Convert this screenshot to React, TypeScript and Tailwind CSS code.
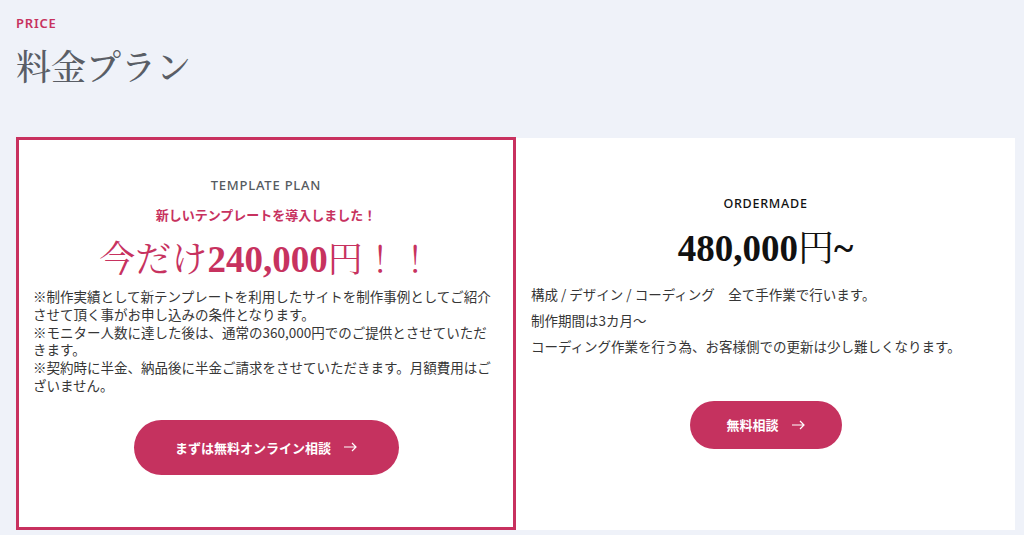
import React from "react";

function Arrow() {
  return (
    <svg width="14" height="10" viewBox="0 0 14 10" fill="none" stroke="currentColor" strokeWidth="1.2" className="ml-3">
      <path d="M1 5h12M9 1l4 4-4 4" />
    </svg>
  );
}

const jp = "font-['Noto_Sans_CJK_JP',sans-serif]";
const serifJp = "font-['Noto_Serif_CJK_JP','Noto_Sans_CJK_JP',serif]";
const serifNum = "font-['Liberation_Serif','Noto_Serif_CJK_JP',serif]";

export default function App() {
  return (
    <div className="w-[1024px] h-[535px] overflow-hidden bg-[#eff2f9] font-['Noto_Sans','Noto_Sans_CJK_JP',sans-serif]">
      <div className="pl-4 pt-[15px]">
        <div className="text-[13px] font-semibold tracking-[0.06em] text-[#c7325f] leading-4">PRICE</div>
        <h1 className={`mt-[12px] text-[35px] leading-[44px] text-[#5a5e66] font-medium ${serifJp}`}>料金プラン</h1>
      </div>
      <div className="flex ml-4 mt-[50px] w-[999px] h-[393px]">
        <div className="w-[500px] h-[393px] border-[3px] border-[#c8315f] bg-white flex flex-col items-center pt-[35px]">
          <div className="text-[13px] font-medium tracking-[0.06em] text-[#555a60] leading-5">TEMPLATE PLAN</div>
          <div className={`mt-[10px] text-[13px] font-bold text-[#c7325f] leading-5 ${jp}`}>
            新しいテンプレートを導入しました！
          </div>
          <div className="mt-[10px] h-[44px] flex items-baseline text-[#c7325f]">
            <span className={`text-[36px] leading-[44px] ${serifJp}`}>今だけ</span>
            <span className={`text-[37px] leading-[44px] font-bold ${serifNum}`}>240,000</span>
            <span className={`text-[35px] leading-[44px] ${serifJp}`}>円！！</span>
          </div>
          <p className={`self-stretch mt-[9px] px-[14px] text-[13.5px] leading-[17.8px] text-[#363636] ${jp}`}>
            ※制作実績として新テンプレートを利用したサイトを制作事例としてご紹介<br />
            させて頂く事がお申し込みの条件となります。<br />
            ※モニター人数に達した後は、通常の360,000円でのご提供とさせていただ<br />
            きます。<br />
            ※契約時に半金、納品後に半金ご請求をさせていただきます。月額費用はご<br />
            ざいません。
          </p>
          <button
            className={`mt-[25px] w-[265px] h-[55px] rounded-full bg-[#c5325f] text-white text-[13px] font-bold flex items-center justify-center ${jp}`}
          >
            まずは無料オンライン相談
            <Arrow />
          </button>
        </div>
        <div className="w-[499px] h-[392px] mt-[1px] bg-white flex flex-col items-center pt-[56px]">
          <div className="text-[12.5px] font-medium tracking-[0.06em] text-[#111] leading-5">ORDERMADE</div>
          <div className="mt-[10px] h-[44px] flex items-baseline text-[#111]">
            <span className={`text-[37px] leading-[44px] font-bold ${serifNum}`}>480,000</span>
            <span className={`text-[36px] leading-[44px] ${serifJp}`}>円</span>
            <span className={`text-[37px] leading-[44px] font-bold ${serifNum}`}>~</span>
          </div>
          <div className={`self-stretch mt-[13px] px-[15px] text-[13.5px] leading-[26px] text-[#363636] ${jp}`}>
            <p>構成 / デザイン / コーディング　全て手作業で行います。</p>
            <p>制作期間は3カ月～</p>
            <p>コーディング作業を行う為、お客様側での更新は少し難しくなります。</p>
          </div>
          <button
            className={`mt-[42px] w-[152px] h-[48px] rounded-full bg-[#c5325f] text-white text-[13px] font-bold flex items-center justify-center ${jp}`}
          >
            無料相談
            <Arrow />
          </button>
        </div>
      </div>
    </div>
  );
}
